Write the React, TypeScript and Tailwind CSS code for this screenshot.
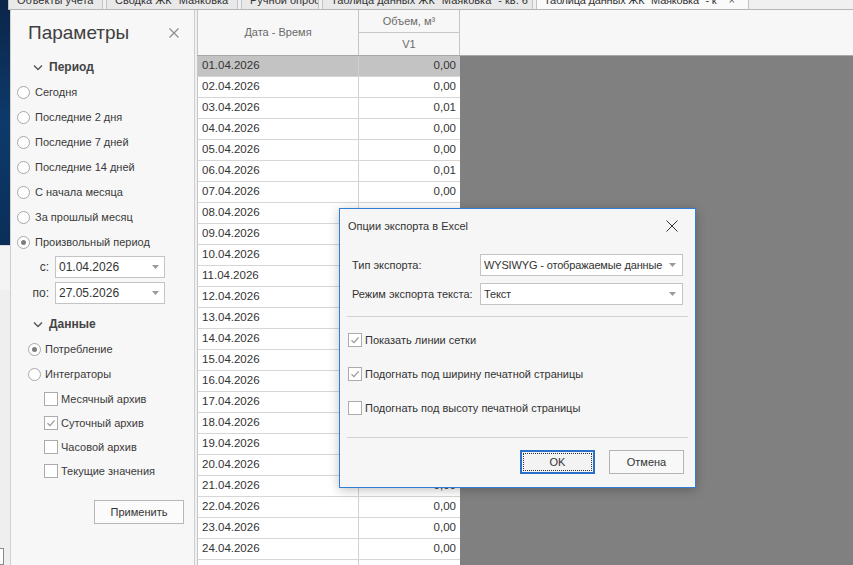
import React from "react";

const F = { fontFamily: '"Liberation Sans", Arial, sans-serif' };

function Radio({ checked }: { checked?: boolean }) {
  return (
    <span className="w-[13px] h-[13px] rounded-full border border-[#a8a8a8] bg-white flex items-center justify-center shrink-0">
      {checked && <span className="w-[5px] h-[5px] rounded-full bg-[#7d7d7d]" />}
    </span>
  );
}

function Check({ checked }: { checked?: boolean }) {
  return (
    <span className="w-[14px] h-[14px] border border-[#ababab] bg-white flex items-center justify-center shrink-0">
      {checked && (
        <svg width="10" height="10" viewBox="0 0 10 10">
          <path d="M1.5 5.2 L4 7.6 L8.6 2.4" fill="none" stroke="#9a9a9a" strokeWidth="1.3" />
        </svg>
      )}
    </span>
  );
}

function Arrow() {
  return (
    <svg width="7" height="4" viewBox="0 0 7 4" className="shrink-0">
      <path d="M0 0 L7 0 L3.5 4 Z" fill="#9a9a9a" />
    </svg>
  );
}

function Chevron() {
  return (
    <svg width="10" height="7" viewBox="0 0 10 7">
      <path d="M1 1.5 L5 5.5 L9 1.5" fill="none" stroke="#555" strokeWidth="1.4" />
    </svg>
  );
}

const tabs = [
  { t: "Объекты учета", w: 95 },
  { t: "Сводка ЖК \"Маяковка\"", w: 132 },
  { t: "Ручной опрос", w: 78 },
  { t: "Таблица данных ЖК \"Маяковка\" - кв. 6", w: 211 },
];

const values = [
  "0,00", "0,00", "0,01", "0,00", "0,00", "0,01", "0,00", "0,00", "0,00", "0,00",
  "0,00", "0,00", "0,00", "0,00", "0,00", "0,00", "0,00", "0,00", "0,00", "0,00",
  "0,00", "0,00", "0,00", "0,00", "0,00",
];

export default function App() {
  const rows = values.map((v, i) => ({
    d: `${String(i + 1).padStart(2, "0")}.04.2026`,
    v,
  }));
  return (
    <div className="relative w-[853px] h-[565px] overflow-hidden flex bg-[#f0f0f0] text-[#333]" style={F}>
      {/* desktop strip */}
      <div className="w-[10px] flex flex-col shrink-0">
        <div className="h-[245px] shrink-0 bg-gradient-to-b from-[#0b2548] via-[#0d3a6b] to-[#0a2e58]" />
        <div className="h-[45px] shrink-0 bg-[#f4f4f4] border-t border-[#d8d8d8]" />
        <div className="flex-1 bg-[#efefef] flex flex-col justify-end">
          <div className="h-[17px] w-[4px] border border-[#8a8a8a] border-l-0 bg-white" />
        </div>
      </div>

      <div className="flex-1 flex flex-col min-h-0 h-[565px]">
        {/* tab strip */}
        <div className="h-[10px] shrink-0 flex bg-[#f0f0f0] border-b border-[#b5b5b5] overflow-hidden text-[11px] text-[#333] -ml-[2px]">
          {tabs.map((tb) => (
            <div
              key={tb.t}
              className="h-[9px] mr-[3px] shrink-0 bg-[#e9e9e9] border-r border-l border-[#c3c3c3] overflow-hidden pl-[8px]"
              style={{ width: tb.w }}
            >
              <div className="leading-[12px] mt-[-6px] whitespace-nowrap">{tb.t}</div>
            </div>
          ))}
          <div className="h-[9px] w-[213px] shrink-0 bg-[#fafafa] border-r border-l border-[#c3c3c3] overflow-hidden pl-[7px] flex">
            <div className="leading-[12px] mt-[-6px] whitespace-nowrap tracking-[-0.2px]">Таблица данных ЖК "Маяковка" - к</div>
            <div className="leading-[12px] mt-[-6px] ml-[12px] text-[#555]">×</div>
          </div>
        </div>

        <div className="flex-1 min-h-0 flex overflow-hidden">
          {/* parameters panel */}
          <div className="w-[185px] shrink-0 bg-[#f7f7f7] border-l border-r border-[#cfcfcf] flex flex-col text-[11px] text-[#3a3a3a]">
            <div className="h-[46px] shrink-0 flex items-center justify-between pl-[17px] pr-[15px]">
              <span className="text-[19px] text-[#404040]">Параметры</span>
              <svg width="10" height="10" viewBox="0 0 10 10">
                <path d="M0.5 0.5 L9.5 9.5 M9.5 0.5 L0.5 9.5" stroke="#8a8a8a" strokeWidth="1.1" />
              </svg>
            </div>
            <div className="h-[22px] shrink-0 flex items-center pl-[22px]">
              <Chevron />
              <span className="ml-[6px] font-bold text-[12px] text-[#444]">Период</span>
            </div>
            <div className="mt-[2px]">
              {[
                "Сегодня",
                "Последние 2 дня",
                "Последние 7 дней",
                "Последние 14 дней",
                "С начала месяца",
                "За прошлый месяц",
                "Произвольный период",
              ].map((t, i) => (
                <div key={t} className="h-[25px] flex items-center pl-[6px] gap-[5px]">
                  <Radio checked={i === 6} />
                  <span>{t}</span>
                </div>
              ))}
            </div>
            <div className="mt-[1px] flex flex-col gap-[4px]">
              {[
                ["с:", "01.04.2026"],
                ["по:", "27.05.2026"],
              ].map(([l, v]) => (
                <div key={l} className="h-[22px] flex items-center">
                  <span className="w-[44px] text-right pr-[6px] text-[12px]">{l}</span>
                  <div className="w-[110px] h-[22px] bg-white border border-[#c4c4c4] flex items-center justify-between pl-[3px] pr-[5px] text-[12px] text-[#333]">
                    <span>{v}</span>
                    <Arrow />
                  </div>
                </div>
              ))}
            </div>
            <div className="mt-[9px] h-[22px] flex items-center pl-[22px]">
              <Chevron />
              <span className="ml-[6px] font-bold text-[12px] text-[#444]">Данные</span>
            </div>
            <div className="mt-[2px]">
              {["Потребление", "Интеграторы"].map((t, i) => (
                <div key={t} className="h-[25px] flex items-center pl-[17px] gap-[4px]">
                  <Radio checked={i === 0} />
                  <span>{t}</span>
                </div>
              ))}
            </div>
            <div>
              {["Месячный архив", "Суточный архив", "Часовой архив", "Текущие значения"].map((t, i) => (
                <div key={t} className="h-[24px] flex items-center pl-[33px] gap-[3px]">
                  <Check checked={i === 1} />
                  <span>{t}</span>
                </div>
              ))}
            </div>
            <div className="mt-[17px] pl-[83px]">
              <div className="w-[90px] h-[24px] border border-[#b8b8b8] bg-[#fbfbfb] flex items-center justify-center text-[11px] text-[#333]">
                Применить
              </div>
            </div>
          </div>

          {/* grid */}
          <div className="ml-[2px] flex-1 flex flex-col min-h-0">
            <div className="h-[46px] shrink-0 flex bg-[#f7f7f7] border-b border-[#a8a8a8] text-[11px] text-[#6a6a6a]">
              <div className="w-[162px] border-l border-r border-[#c6c6c6] flex items-center justify-center">
                Дата - Время
              </div>
              <div className="w-[101px] border-r border-[#c6c6c6] flex flex-col">
                <div className="h-[23px] border-b border-[#c6c6c6] flex items-center justify-center">Объем, м³</div>
                <div className="flex-1 flex items-center justify-center">V1</div>
              </div>
              <div className="flex-1" />
            </div>
            <div className="flex-1 min-h-0 flex overflow-hidden">
              <div className="w-[263px] flex flex-col bg-white border-l border-[#c6c6c6] text-[11.5px] text-[#333]">
                {rows.map((r, i) => (
                  <div
                    key={r.d}
                    className={`h-[21px] shrink-0 flex border-b border-[#d6d6d6] ${i === 0 ? "bg-[#c3c3c3]" : "bg-white"}`}
                  >
                    <div className="w-[161px] border-r border-[#d0d0d0] flex items-center pl-[4px]">{r.d}</div>
                    <div className="w-[101px] flex items-center justify-end pr-[4px]">{r.v}</div>
                  </div>
                ))}
              </div>
              <div className="flex-1 bg-[#808080]" />
            </div>
          </div>
        </div>
      </div>

      {/* export dialog */}
      <div className="absolute left-[339px] top-[208px] w-[357px] h-[280px] bg-[#f6f6f6] border border-[#2f7fd4] shadow-[0_2px_10px_rgba(0,0,0,0.25)] flex flex-col text-[11px] text-[#333]">
        <div className="h-[34px] shrink-0 flex items-center justify-between pl-[8px] pr-[17px]">
          <span>Опции экспорта в Excel</span>
          <svg width="12" height="12" viewBox="0 0 12 12">
            <path d="M0.5 0.5 L11.5 11.5 M11.5 0.5 L0.5 11.5" stroke="#333" strokeWidth="1" />
          </svg>
        </div>
        <div className="mt-[11px] flex flex-col gap-[7px] pl-[12px]">
          {[
            ["Тип экспорта:", "WYSIWYG - отображаемые данные"],
            ["Режим экспорта текста:", "Текст"],
          ].map(([l, v]) => (
            <div key={l} className="h-[22px] flex items-center">
              <span className="w-[128px]">{l}</span>
              <div className="w-[203px] h-[22px] bg-white border border-[#c4c4c4] flex items-center justify-between pl-[3px] pr-[6px] text-[11px]">
                <span className="whitespace-nowrap tracking-[-0.15px]">{v}</span>
                <Arrow />
              </div>
            </div>
          ))}
        </div>
        <div className="mt-[11px] mx-[7px] h-px bg-[#d2d2d2]" />
        <div className="mt-[6px] pl-[8px]">
          {[
            ["Показать линии сетки", true],
            ["Подогнать под ширину печатной страницы", true],
            ["Подогнать под высоту печатной страницы", false],
          ].map(([t, c]) => (
            <div key={t as string} className="h-[34px] flex items-center gap-[3px]">
              <Check checked={c as boolean} />
              <span>{t as string}</span>
            </div>
          ))}
        </div>
        <div className="mt-[12px] mx-[7px] h-px bg-[#d2d2d2]" />
        <div className="mt-[12px] flex justify-end gap-[14px] pr-[11px]">
          <div className="w-[75px] h-[24px] border-2 border-[#2a6fc9] bg-[#f3f3f3] flex items-center justify-center p-[1px]">
            <div className="w-full h-full border border-dotted border-[#333] flex items-center justify-center">OK</div>
          </div>
          <div className="w-[75px] h-[24px] border border-[#b4b4b4] bg-[#f8f8f8] flex items-center justify-center">Отмена</div>
        </div>
      </div>
    </div>
  );
}
